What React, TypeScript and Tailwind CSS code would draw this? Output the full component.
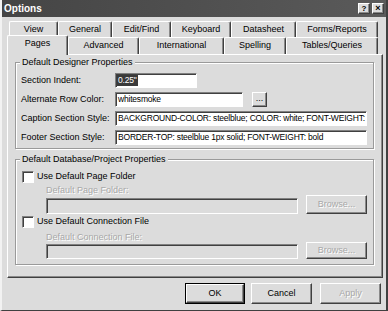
import React from 'react';

const raised =
  'border border-t-white border-l-white border-r-[#404040] border-b-[#404040] shadow-[inset_-1px_-1px_0_#8a8a8a]';
const sunken =
  'border border-t-[#808080] border-l-[#808080] border-r-white border-b-white shadow-[inset_1px_1px_0_#404040]';
const disabledText = 'text-[#a8a8a8] [text-shadow:1px_1px_0_#fff]';

const row1 = [
  { label: 'View', w: 49 },
  { label: 'General', w: 54 },
  { label: 'Edit/Find', w: 59 },
  { label: 'Keyboard', w: 60 },
  { label: 'Datasheet', w: 65 },
  { label: 'Forms/Reports', w: 82 },
];

const row2 = [
  { label: 'Advanced', w: 71 },
  { label: 'International', w: 85 },
  { label: 'Spelling', w: 62 },
  { label: 'Tables/Queries', w: 92 },
];

function Tab({ label, w }: { label: string; w: number }) {
  return (
    <div
      className="h-full flex items-center justify-center border-t border-l border-r border-t-white border-l-white border-r-[#404040] rounded-t-[2px] shadow-[inset_-1px_0_0_#8a8a8a]"
      style={{ width: w }}
    >
      {label}
    </div>
  );
}

function Group({ title, h, className, children }: { title: string; h: number; className?: string; children: React.ReactNode }) {
  return (
    <div
      className={`relative border border-[#9a9a9a] shadow-[inset_1px_1px_0_#fff,1px_1px_0_#fff] ${className ?? ''}`}
      style={{ height: h }}
    >
      <span className="absolute -top-[7px] left-[4px] px-[2px] bg-[#dcdcdc] leading-[12px]">{title}</span>
      {children}
    </div>
  );
}

function Field({ label, children }: { label: string; children: React.ReactNode }) {
  return (
    <div className="flex items-center h-[15px]">
      <div className="w-[94px] shrink-0">{label}</div>
      {children}
    </div>
  );
}

function Checkbox({ label }: { label: string }) {
  return (
    <div className="flex items-center h-[12px] ml-[6px]">
      <div className={`w-[12px] h-[12px] bg-white ${sunken}`} />
      <span className="ml-[3px]">{label}</span>
    </div>
  );
}

function Btn({ label, w, h, disabled, def }: { label: string; w: number; h: number; disabled?: boolean; def?: boolean }) {
  return (
    <div className={def ? 'border border-black' : ''}>
      <div
        className={`flex items-center justify-center bg-[#dcdcdc] ${raised} ${disabled ? disabledText : ''}`}
        style={{ width: def ? w - 2 : w, height: def ? h - 2 : h }}
      >
        {label}
      </div>
    </div>
  );
}

const inputText = 'text-[8.5px] tracking-[-0.2px] overflow-hidden whitespace-nowrap';

export default function App() {
  return (
    <div className="w-[388px] h-[311px] bg-[#dcdcdc] border-l-2 border-l-[#f2f2f2] border-r-2 border-r-[#404040] border-b border-b-[#404040] flex flex-col text-[9px] text-black [font-family:'Liberation_Sans',Arial,sans-serif] overflow-hidden">
      <div className="h-[17px] shrink-0 flex items-center justify-between pl-[2px] pr-[2px] bg-gradient-to-r from-[#454545] to-[#5a5a5a]">
        <span className="text-white font-bold text-[10px]">Options</span>
        <div className="flex gap-[2px]">
          <div className={`w-[12px] h-[11px] bg-[#dcdcdc] ${raised} flex items-center justify-center text-[8px] font-bold leading-none`}>?</div>
          <div className={`w-[12px] h-[11px] bg-[#dcdcdc] ${raised} flex items-center justify-center text-[9px] font-bold leading-none`}>×</div>
        </div>
      </div>

      <div className="flex h-[16px] mt-[4px] ml-[7px]">
        {row1.map((t) => (
          <Tab key={t.label} {...t} />
        ))}
      </div>
      <div className="flex h-[17px] ml-[5px] relative z-10">
        <div className="w-[61px] -mt-[2px] h-[20px] pb-[3px] flex items-center justify-center bg-[#dcdcdc] border-t border-l border-r border-t-white border-l-white border-r-[#404040] rounded-t-[2px] shadow-[inset_-1px_0_0_#8a8a8a]">
          Pages
        </div>
        {row2.map((t) => (
          <Tab key={t.label} {...t} />
        ))}
      </div>

      <div className="ml-[5px] w-[376px] h-[224px] border border-t-white border-l-white border-r-[#404040] border-b-[#404040] shadow-[inset_-1px_-1px_0_#8a8a8a] pl-[7px] pt-[7px]">
        <Group title="Default Designer Properties" h={87} className="w-[359px]">
          <div className="flex flex-col gap-[4px] pt-[10px] pl-[5px]">
            <Field label="Section Indent:">
              <div className={`w-[82px] h-[15px] bg-white ${sunken} flex items-center pl-[1px] ${inputText}`}>
                <span className="bg-[#3a3a3a] text-white px-[1px] leading-[11px]">0.25"</span>
              </div>
            </Field>
            <Field label="Alternate Row Color:">
              <div className={`w-[128px] h-[15px] bg-white ${sunken} flex items-center pl-[2px] ${inputText}`}>whitesmoke</div>
              <div className={`ml-[9px] w-[15px] h-[15px] ${raised} flex items-center justify-center leading-none pb-[3px]`}>...</div>
            </Field>
            <Field label="Caption Section Style:">
              <div className={`w-[252px] h-[15px] bg-white ${sunken} flex items-center pl-[2px] ${inputText}`}>
                BACKGROUND-COLOR: steelblue; COLOR: white; FONT-WEIGHT: bold
              </div>
            </Field>
            <Field label="Footer Section Style:">
              <div className={`w-[252px] h-[15px] bg-white ${sunken} flex items-center pl-[2px] ${inputText}`}>
                BORDER-TOP: steelblue 1px solid; FONT-WEIGHT: bold
              </div>
            </Field>
          </div>
        </Group>

        <Group title="Default Database/Project Properties" h={106} className="w-[359px] mt-[10px]">
          <div className="flex flex-col pt-[11px]">
            <Checkbox label="Use Default Page Folder" />
            <div className={`ml-[30px] mt-[3px] h-[9px] leading-[9px] ${disabledText}`}>Default Page Folder:</div>
            <div className="flex items-end ml-[30px] gap-[8px] h-[19px]">
              <div className={`w-[252px] h-[16px] ${sunken}`} />
              <Btn label="Browse..." w={61} h={19} disabled />
            </div>
            <div className="mt-[2px]">
              <Checkbox label="Use Default Connection File" />
            </div>
            <div className={`ml-[30px] mt-[5px] h-[9px] leading-[9px] ${disabledText}`}>Default Connection File:</div>
            <div className="flex items-end ml-[30px] gap-[8px] h-[17px]">
              <div className={`w-[252px] h-[15px] ${sunken}`} />
              <Btn label="Browse..." w={61} h={17} disabled />
            </div>
          </div>
        </Group>
      </div>

      <div className="flex mt-[5px] ml-[183px]">
        <Btn label="OK" w={60} h={21} def />
        <div className="ml-[6px]">
          <Btn label="Cancel" w={61} h={21} />
        </div>
        <div className="ml-[8px]">
          <Btn label="Apply" w={61} h={21} disabled />
        </div>
      </div>
    </div>
  );
}
